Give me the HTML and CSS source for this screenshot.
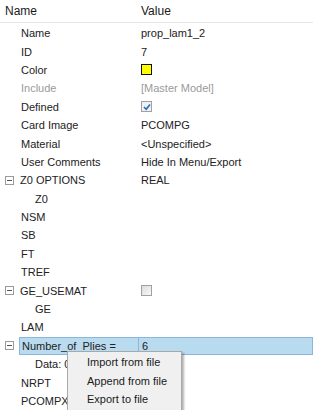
FILE: index.html
```html
<!DOCTYPE html>
<html>
<head>
<meta charset="utf-8">
<link rel="stylesheet" href="styles.css">
</head>
<body>
<div class="panel">
  <div class="header">
    <div class="hname">Name</div>
    <div class="hvalue">Value</div>
  </div>
  <div class="rows">
    <div class="row"><div class="name l1">Name</div><div class="value">prop_lam1_2</div></div>
    <div class="row"><div class="name l1">ID</div><div class="value">7</div></div>
    <div class="row"><div class="name l1">Color</div><div class="value"><span class="swatch"></span></div></div>
    <div class="row muted"><div class="name l1">Include</div><div class="value">[Master Model]</div></div>
    <div class="row"><div class="name l1">Defined</div><div class="value"><span class="check on"><svg width="8" height="8" viewBox="0 0 8 8"><path d="M1 4 L3.2 6.2 L7 1.5" fill="none" stroke="#2b6cb8" stroke-width="1.6"/></svg></span></div></div>
    <div class="row"><div class="name l1">Card Image</div><div class="value">PCOMPG</div></div>
    <div class="row"><div class="name l1">Material</div><div class="value">&lt;Unspecified&gt;</div></div>
    <div class="row"><div class="name l1">User Comments</div><div class="value">Hide In Menu/Export</div></div>
    <div class="row"><div class="name l0"><span class="tog"></span>Z0 OPTIONS</div><div class="value">REAL</div></div>
    <div class="row"><div class="name l2">Z0</div><div class="value"></div></div>
    <div class="row"><div class="name l1">NSM</div><div class="value"></div></div>
    <div class="row"><div class="name l1">SB</div><div class="value"></div></div>
    <div class="row"><div class="name l1">FT</div><div class="value"></div></div>
    <div class="row"><div class="name l1">TREF</div><div class="value"></div></div>
    <div class="row"><div class="name l0"><span class="tog"></span>GE_USEMAT</div><div class="value"><span class="check"></span></div></div>
    <div class="row"><div class="name l2">GE</div><div class="value"></div></div>
    <div class="row"><div class="name l1">LAM</div><div class="value"></div></div>
    <div class="row sel"><span class="tog"></span><div class="selname">Number_of_Plies =</div><div class="selvalue">6</div></div>
    <div class="row"><div class="name l2">Data: 0</div><div class="value"></div></div>
    <div class="row"><div class="name l1">NRPT</div><div class="value"></div></div>
    <div class="row"><div class="name l1">PCOMPX</div><div class="value"></div></div>
  </div>
  <div class="menu">
    <div class="item">Import from file</div>
    <div class="item">Append from file</div>
    <div class="item">Export to file</div>
  </div>
</div>
</body>
</html>
```
FILE: styles.css
```css
html, body {
  margin: 0;
  padding: 0;
  background: #ffffff;
}
body {
  font-family: "Liberation Sans", Arial, sans-serif;
  font-size: 11px;
  color: #222222;
}
.panel {
  position: relative;
  width: 313px;
}
.header {
  display: flex;
  height: 22px;
  align-items: center;
  border-bottom: 1px solid #e6e6e6;
  color: #1a1a1a;
  font-size: 12px;
}
.hname {
  width: 136px;
  padding-left: 5px;
}
.hvalue {
  flex: 1;
}
.rows {
  display: flex;
  flex-direction: column;
  padding-top: 1px;
}
.row {
  display: flex;
  align-items: center;
  height: 18.4px;
}
.name {
  width: 141px;
  box-sizing: border-box;
  display: flex;
  align-items: center;
  white-space: nowrap;
}
.l0 { padding-left: 5px; }
.l1 { padding-left: 21px; }
.l2 { padding-left: 35px; }
.value {
  flex: 1;
  display: flex;
  align-items: center;
}
.muted { color: #9a9a9a; }
.tog {
  width: 9px;
  height: 9px;
  box-sizing: border-box;
  border: 1px solid #9a9a9a;
  margin-right: 6px;
  position: relative;
  flex: none;
}
.tog::after {
  content: "";
  position: absolute;
  left: 1px;
  right: 1px;
  top: 3px;
  height: 1px;
  background: #555;
}
.swatch {
  width: 11px;
  height: 11px;
  box-sizing: border-box;
  border: 1px solid #111;
  background: #ffff00;
}
.check {
  width: 11px;
  height: 11px;
  box-sizing: border-box;
  border: 1px solid #a0a0a0;
  background: linear-gradient(135deg, #dcdcdc, #f8f8f8);
  display: flex;
  align-items: center;
  justify-content: center;
}
.check.on {
  background: #eef2f6;
}
.sel {
  padding-left: 5px;
}
.sel .tog { margin-right: 5px; }
.selname, .selvalue {
  height: 18px;
  box-sizing: border-box;
  background: #b9dbf0;
  border: 1px solid #8cb6da;
  display: flex;
  align-items: center;
  padding-left: 2px;
}
.selname {
  width: 119px;
  border-right: none;
  white-space: nowrap;
  overflow: hidden;
}
.selvalue {
  flex: 1;
  border-left: 1px solid #8cb6da;
  padding-left: 3px;
}
.menu {
  position: absolute;
  left: 67px;
  top: 351px;
  width: 115px;
  box-sizing: border-box;
  background: #f0f0f0;
  border: 1px solid #a8a8a8;
  box-shadow: 2px 2px 2px rgba(0,0,0,0.3);
  padding: 1px 0 3px;
}
.item {
  height: 18.5px;
  display: flex;
  align-items: center;
  padding-left: 19px;
  color: #1a1a1a;
  white-space: nowrap;
}
```
